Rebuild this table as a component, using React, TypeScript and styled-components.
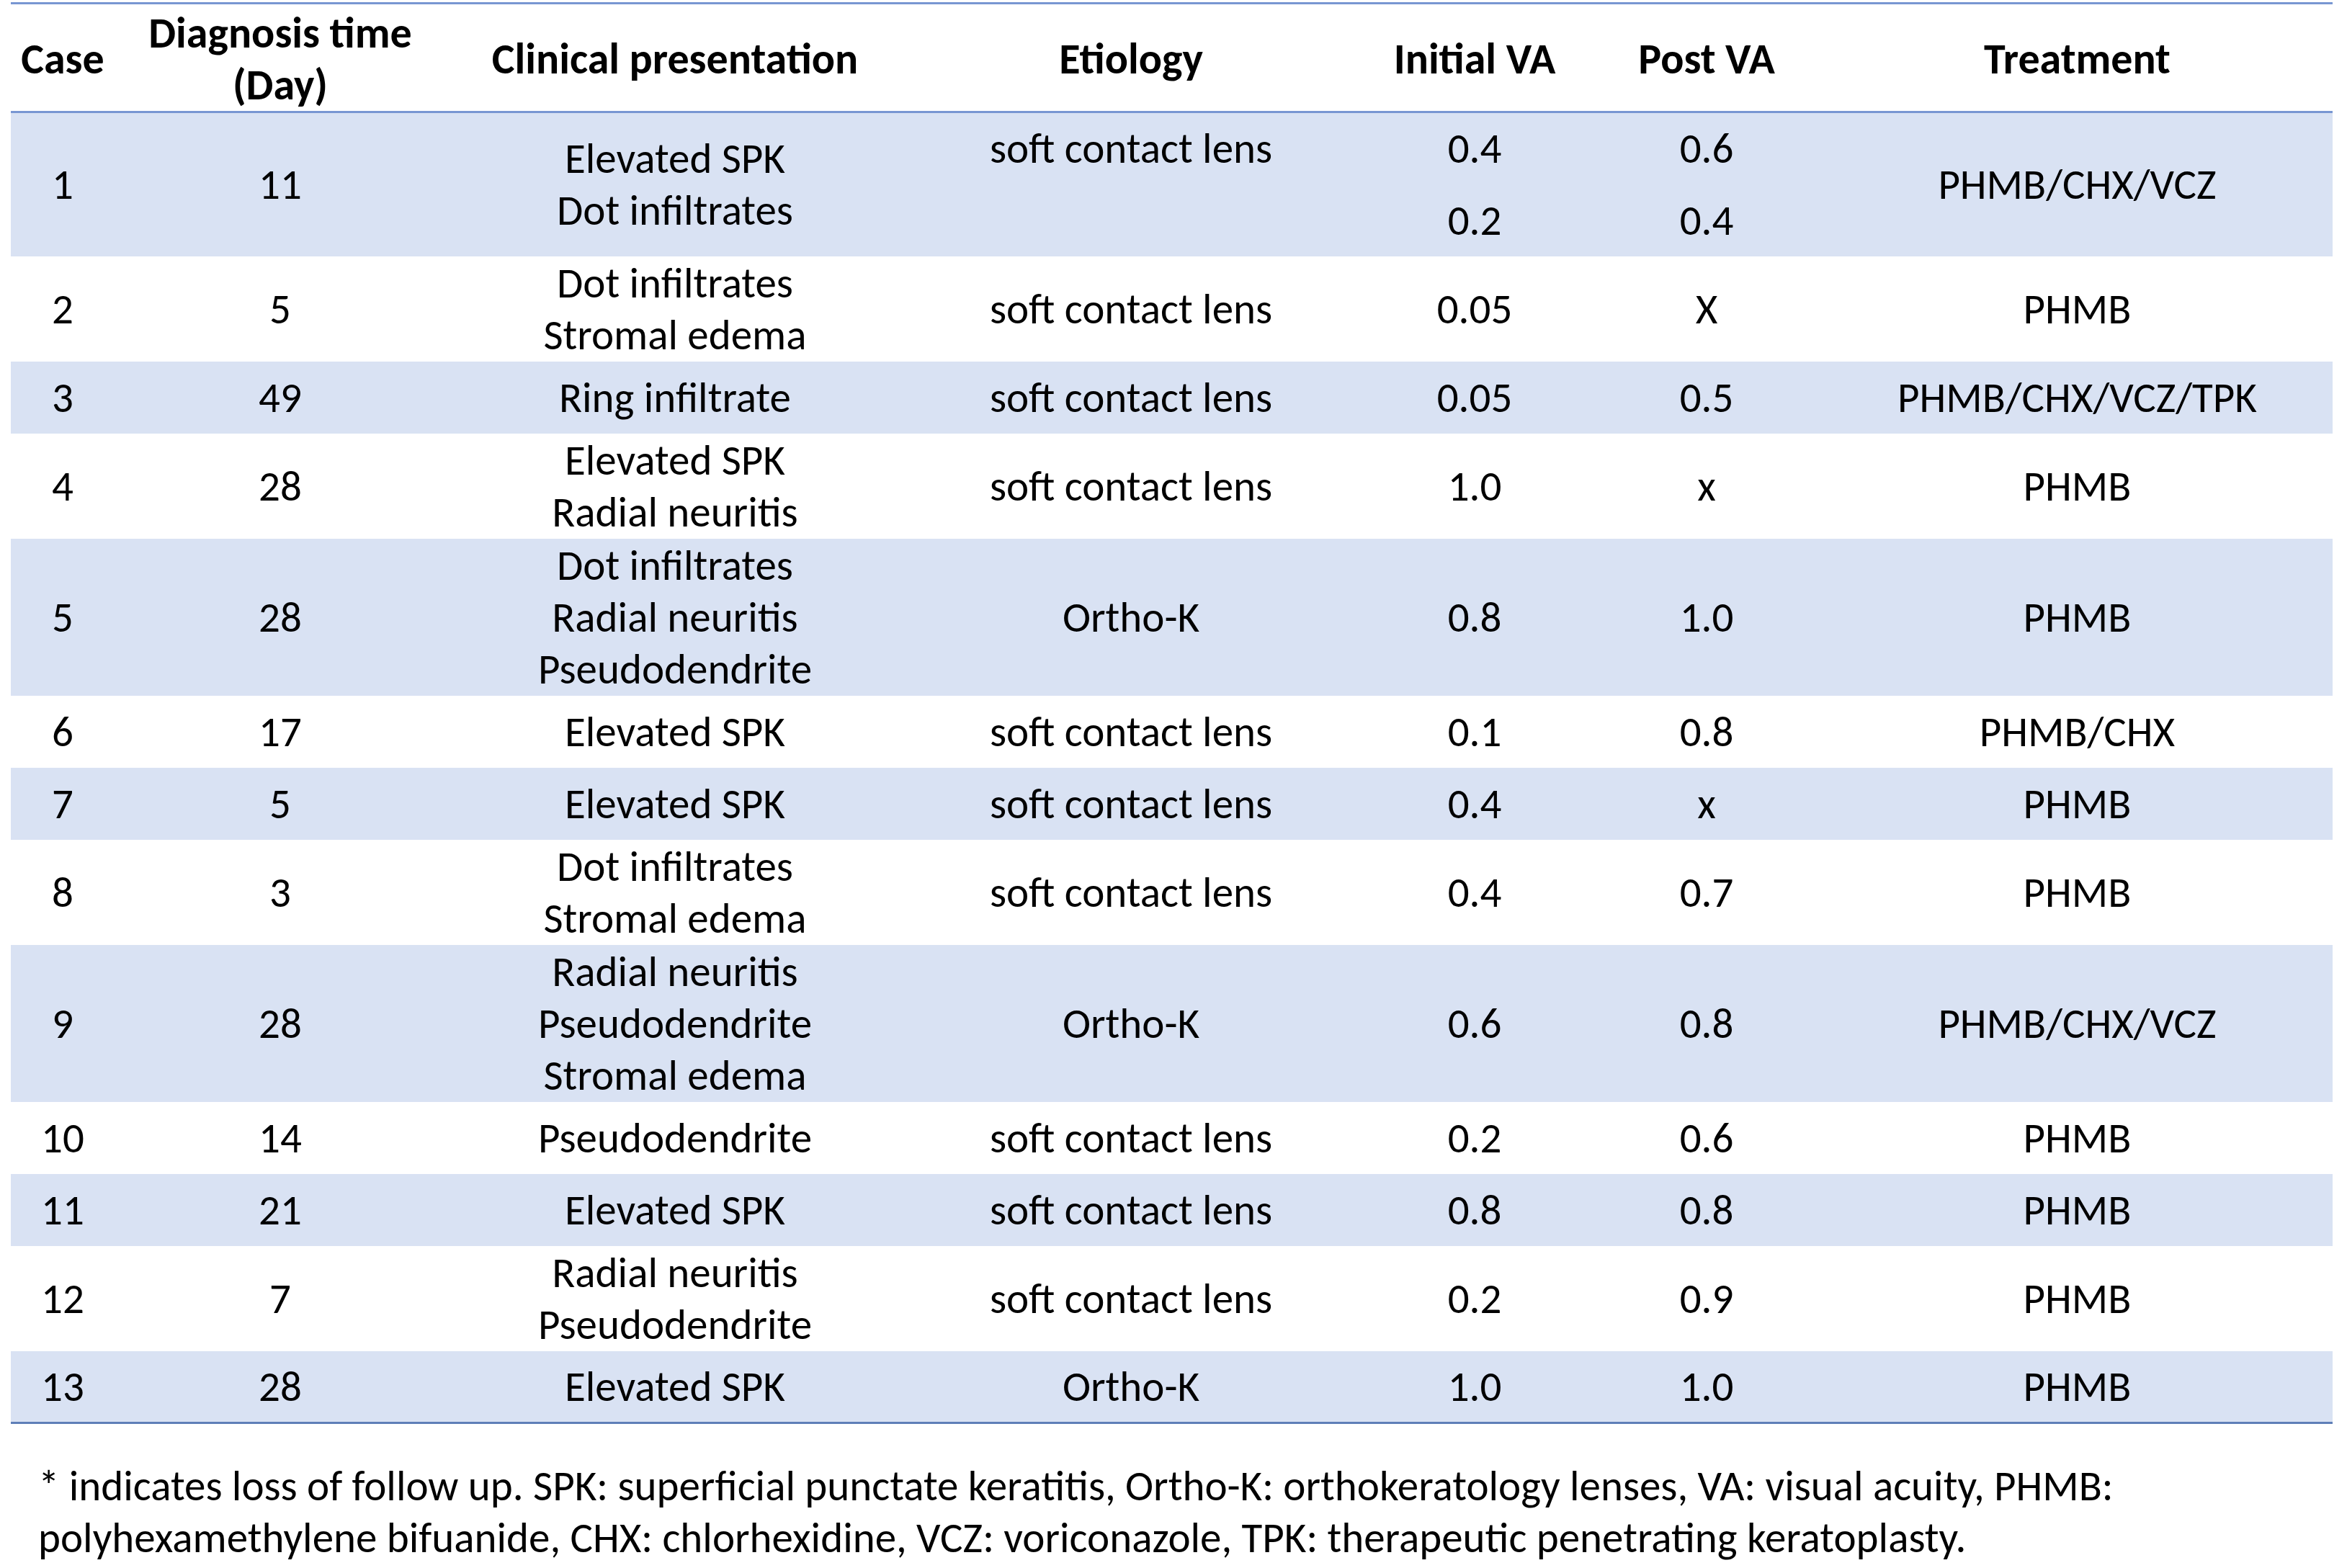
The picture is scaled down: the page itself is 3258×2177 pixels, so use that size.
import React from 'react';
import styled, { createGlobalStyle } from 'styled-components';

type Entry = {
  id: string;
  day: string;
  signs: string[];
  cause: string;
  initial: string;
  post: string;
  treatment: string;
};

const cases: Entry[] = [
  { id: '2', day: '5', signs: ['Dot infiltrates', 'Stromal edema'], cause: 'soft contact lens', initial: '0.05', post: 'X', treatment: 'PHMB' },
  { id: '3', day: '49', signs: ['Ring infiltrate'], cause: 'soft contact lens', initial: '0.05', post: '0.5', treatment: 'PHMB/CHX/VCZ/TPK' },
  { id: '4', day: '28', signs: ['Elevated SPK', 'Radial neuritis'], cause: 'soft contact lens', initial: '1.0', post: 'x', treatment: 'PHMB' },
  { id: '5', day: '28', signs: ['Dot infiltrates', 'Radial neuritis', 'Pseudodendrite'], cause: 'Ortho-K', initial: '0.8', post: '1.0', treatment: 'PHMB' },
  { id: '6', day: '17', signs: ['Elevated SPK'], cause: 'soft contact lens', initial: '0.1', post: '0.8', treatment: 'PHMB/CHX' },
  { id: '7', day: '5', signs: ['Elevated SPK'], cause: 'soft contact lens', initial: '0.4', post: 'x', treatment: 'PHMB' },
  { id: '8', day: '3', signs: ['Dot infiltrates', 'Stromal edema'], cause: 'soft contact lens', initial: '0.4', post: '0.7', treatment: 'PHMB' },
  { id: '9', day: '28', signs: ['Radial neuritis', 'Pseudodendrite', 'Stromal edema'], cause: 'Ortho-K', initial: '0.6', post: '0.8', treatment: 'PHMB/CHX/VCZ' },
  { id: '10', day: '14', signs: ['Pseudodendrite'], cause: 'soft contact lens', initial: '0.2', post: '0.6', treatment: 'PHMB' },
  { id: '11', day: '21', signs: ['Elevated SPK'], cause: 'soft contact lens', initial: '0.8', post: '0.8', treatment: 'PHMB' },
  { id: '12', day: '7', signs: ['Radial neuritis', 'Pseudodendrite'], cause: 'soft contact lens', initial: '0.2', post: '0.9', treatment: 'PHMB' },
  { id: '13', day: '28', signs: ['Elevated SPK'], cause: 'Ortho-K', initial: '1.0', post: '1.0', treatment: 'PHMB' },
];

const widths = [144, 460, 636, 630, 324, 320, 709];

const GlobalStyle = createGlobalStyle`
  html, body {
    margin: 0;
    padding: 0;
    background: #ffffff;
  }
  body {
    font-family: Carlito, Lato, "Liberation Sans", sans-serif;
    color: #000000;
  }
`;

const Page = styled.div`
  padding: 3px 20px 0 15px;
`;

const Table = styled.table`
  width: 3223px;
  border-collapse: collapse;
  table-layout: fixed;
  font-size: 59px;
  line-height: 72px;
  border-top: 3px solid #7896d2;
  border-bottom: 3px solid #5f7fb8;
`;

const HeadRow = styled.tr`
  border-bottom: 3px solid #7896d2;
`;

const HeadCell = styled.th`
  padding: 4px 0 0;
  height: 140px;
  font-size: 60px;
  font-weight: 700;
  text-align: center;
  vertical-align: middle;
  white-space: nowrap;
`;

const Row = styled.tr<{ $shaded: boolean; $h: number }>`
  height: ${(p) => p.$h}px;
  background: ${(p) => (p.$shaded ? '#d9e2f3' : '#ffffff')};
`;

const Cell = styled.td`
  padding: 0;
  text-align: center;
  vertical-align: middle;
  white-space: nowrap;
`;

const Note = styled.p`
  margin: 50px 0 0 38px;
  font-size: 59px;
  line-height: 72px;
  white-space: nowrap;
`;

const rowHeight = (lines: number) => (lines === 1 ? 100 : lines * 72 + 2);

const Lines = ({ items }: { items: string[] }) => (
  <>
    {items.map((t, i) => (
      <React.Fragment key={t + i}>
        {i > 0 && <br />}
        {t}
      </React.Fragment>
    ))}
  </>
);

export default function App() {
  return (
    <Page>
      <GlobalStyle />
      <Table>
        <colgroup>
          {widths.map((w, i) => (
            <col key={i} style={{ width: w }} />
          ))}
        </colgroup>
        <thead>
          <HeadRow>
            <HeadCell>Case</HeadCell>
            <HeadCell>
              Diagnosis time
              <br />
              (Day)
            </HeadCell>
            <HeadCell>Clinical presentation</HeadCell>
            <HeadCell>Etiology</HeadCell>
            <HeadCell>Initial VA</HeadCell>
            <HeadCell>Post VA</HeadCell>
            <HeadCell>Treatment</HeadCell>
          </HeadRow>
        </thead>
        <tbody>
          <Row $shaded $h={100}>
            <Cell rowSpan={2}>1</Cell>
            <Cell rowSpan={2}>11</Cell>
            <Cell rowSpan={2}>
              <Lines items={['Elevated SPK', 'Dot infiltrates']} />
            </Cell>
            <Cell>soft contact lens</Cell>
            <Cell>0.4</Cell>
            <Cell>0.6</Cell>
            <Cell rowSpan={2}>PHMB/CHX/VCZ</Cell>
          </Row>
          <Row $shaded $h={100}>
            <Cell />
            <Cell>0.2</Cell>
            <Cell>0.4</Cell>
          </Row>
          {cases.map((c, i) => (
            <Row key={c.id} $shaded={i % 2 === 1} $h={rowHeight(c.signs.length)}>
              <Cell>{c.id}</Cell>
              <Cell>{c.day}</Cell>
              <Cell>
                <Lines items={c.signs} />
              </Cell>
              <Cell>{c.cause}</Cell>
              <Cell>{c.initial}</Cell>
              <Cell>{c.post}</Cell>
              <Cell>{c.treatment}</Cell>
            </Row>
          ))}
        </tbody>
      </Table>
      <Note>
        * indicates loss of follow up. SPK: superficial punctate keratitis, Ortho-K: orthokeratology lenses, VA: visual acuity, PHMB:
        <br />
        polyhexamethylene bifuanide, CHX: chlorhexidine, VCZ: voriconazole, TPK: therapeutic penetrating keratoplasty.
      </Note>
    </Page>
  );
}
